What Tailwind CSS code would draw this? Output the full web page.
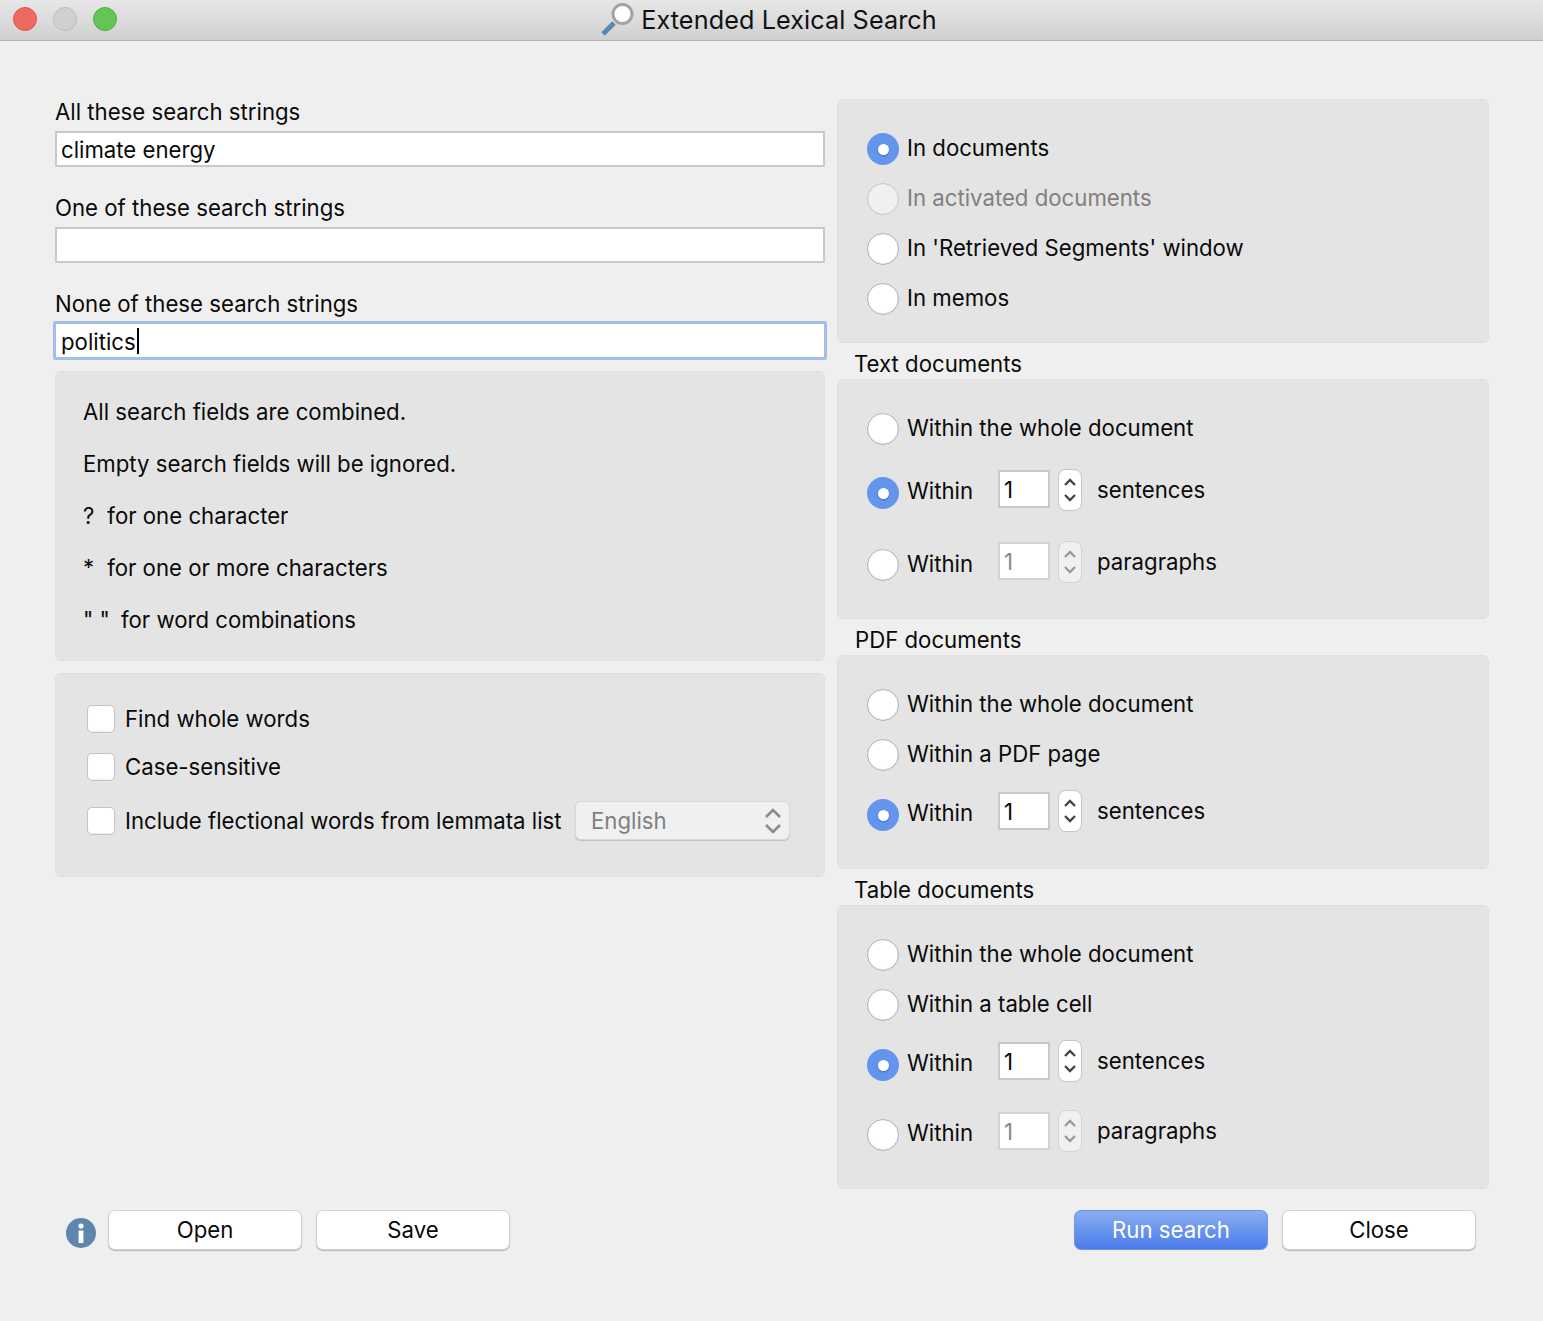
<!DOCTYPE html>
<html lang="en">
<head>
    <meta charset="UTF-8">
    <title>Extended Lexical Search</title>
    <script src="https://cdn.jsdelivr.net/npm/@tailwindcss/browser@4"></script>
</head>
<body class="bg-[#efefef] font-['Inter','Liberation_Sans',sans-serif] text-[22.2px] leading-[28px] text-[#0a0a0a] antialiased">
<div class="w-[1543px] h-[1321px] overflow-hidden flex flex-col">
    <!-- Title bar -->
    <div class="relative h-[41px] shrink-0 bg-gradient-to-b from-[#e8e7e8] to-[#d1d0d1] border-b border-[#b4b4b4] flex items-center justify-center">
        <div class="absolute left-[13px] top-[7px] flex gap-[16px]">
            <div class="w-[24px] h-[24px] rounded-full bg-[#ee6a5f] border border-[#d9574c]"></div>
            <div class="w-[24px] h-[24px] rounded-full bg-[#d0d0d0] border border-[#bcbcbc]"></div>
            <div class="w-[24px] h-[24px] rounded-full bg-[#62c554] border border-[#53ad46]"></div>
        </div>
        <div class="flex items-center gap-[7px] mr-[6px]">
            <svg width="34" height="34" viewBox="0 0 34 34">
                <path d="M3 31 L14 20" stroke="#5c87b0" stroke-width="5" fill="none"/>
                <circle cx="22.5" cy="11" r="9.5" fill="#fff" stroke="#a3a3a3" stroke-width="3"/>
            </svg>
            <span class="text-[25.2px] leading-[30px] tracking-[0.1px] text-[#111]">Extended Lexical Search</span>
        </div>
    </div>

    <div class="flex h-[1168px] shrink-0 pl-[55px] gap-[12px]">
        <!-- Left column -->
        <div class="w-[770px] pt-[58px] flex flex-col">
            <label class="h-[32px] pb-[6px] flex items-center">All these search strings</label>
            <div class="h-[36px] bg-white border-2 border-[#c9c9c9] px-[4px] pt-[2px] flex items-center">climate energy</div>
            <label class="h-[32px] mt-[28px] pb-[6px] flex items-center">One of these search strings</label>
            <div class="h-[36px] bg-white border-2 border-[#c9c9c9]"></div>
            <label class="h-[32px] mt-[26px] pb-[2px] flex items-center">None of these search strings</label>
            <div class="h-[39px] -mx-[2px] bg-white border-[3px] border-[#a3bfe8] rounded-[2px] px-[5px] flex items-center"><span class="pt-[2px]">politics</span><span class="inline-block w-[2px] h-[26px] bg-black ml-[1px]"></span></div>

            <div class="mt-[11px] h-[290px] bg-[#e4e4e4] border border-[#dfdfdf] rounded-[6px] pl-[27px] pt-[26px] flex flex-col gap-[24px]">
                <p>All search fields are combined.</p>
                <p>Empty search fields will be ignored.</p>
                <p class="flex gap-[13px]"><span>?</span><span>for one character</span></p>
                <p class="flex gap-[13px]"><span>*</span><span>for one or more characters</span></p>
                <p class="flex gap-[11px]"><span>" "</span><span>for word combinations</span></p>
            </div>

            <div class="mt-[12px] h-[204px] bg-[#e4e4e4] border border-[#dfdfdf] rounded-[6px] pl-[31px] pt-[31px] flex flex-col">
                <div class="flex items-center gap-[10px] h-[28px]">
                    <div class="w-[28px] h-[28px] bg-white border border-[#c4c4c4] rounded-[5px] shadow-[inset_0_-1px_1px_#eee]"></div>
                    <span>Find whole words</span>
                </div>
                <div class="flex items-center gap-[10px] h-[28px] mt-[20px]">
                    <div class="w-[28px] h-[28px] bg-white border border-[#c4c4c4] rounded-[5px] shadow-[inset_0_-1px_1px_#eee]"></div>
                    <span>Case-sensitive</span>
                </div>
                <div class="flex items-center h-[40px] mt-[20px]">
                    <div class="w-[28px] h-[28px] bg-white border border-[#c4c4c4] rounded-[5px] shadow-[inset_0_-1px_1px_#eee]"></div>
                    <span class="ml-[10px] w-[450px] whitespace-nowrap">Include flectional words from lemmata list</span>
                    <div class="w-[215px] h-[39px] -mt-[1px] bg-[#f0f0f0] rounded-[6px] border border-[#d8d8d8] shadow-[0_1px_1px_#bdbdbd] pl-[15px] pr-[7px] flex items-center justify-between text-[#7f7f7f]">
                        <span>English</span>
                        <svg width="18" height="28" viewBox="0 0 18 28" fill="none" stroke="#8a8a8a" stroke-width="2.6"><path d="M2 10 L9 3 L16 10"/><path d="M2 18 L9 25 L16 18"/></svg>
                    </div>
                </div>
            </div>
        </div>

        <!-- Right column -->
        <div class="w-[652px] pt-[58px] flex flex-col">
            <div class="h-[244px] bg-[#e4e4e4] border border-[#dfdfdf] rounded-[6px] pl-[29px] pt-[33px] flex flex-col gap-[18px]">
                <div class="flex items-center h-[32px] gap-[8px]">
                    <div class="w-[32px] h-[32px] rounded-full bg-[#6495ed] flex items-center justify-center"><div class="w-[11px] h-[11px] rounded-full bg-white shadow-[0_1px_2px_#3f6fc4]"></div></div>
                    <span class="-mt-[3px]">In documents</span>
                </div>
                <div class="flex items-center h-[32px] gap-[8px] text-[#808080]">
                    <div class="w-[32px] h-[32px] rounded-full bg-[#f0f0f0] border border-[#c6c6c6]"></div>
                    <span class="-mt-[3px]">In activated documents</span>
                </div>
                <div class="flex items-center h-[32px] gap-[8px]">
                    <div class="w-[32px] h-[32px] rounded-full bg-white border border-[#b0b0b0] shadow-[inset_0_-1px_1px_#eee]"></div>
                    <span class="-mt-[3px]">In 'Retrieved Segments' window</span>
                </div>
                <div class="flex items-center h-[32px] gap-[8px]">
                    <div class="w-[32px] h-[32px] rounded-full bg-white border border-[#b0b0b0] shadow-[inset_0_-1px_1px_#eee]"></div>
                    <span class="-mt-[3px]">In memos</span>
                </div>
            </div>

            <div class="h-[36px] pl-[17px] pt-[6px] flex items-center">Text documents</div>
            <div class="h-[240px] bg-[#e4e4e4] border border-[#dfdfdf] rounded-[6px] pl-[29px] pt-[33px] flex flex-col">
                <div class="flex items-center h-[32px] gap-[8px]">
                    <div class="w-[32px] h-[32px] rounded-full bg-white border border-[#b0b0b0] shadow-[inset_0_-1px_1px_#eee]"></div>
                    <span class="-mt-[3px]">Within the whole document</span>
                </div>
                <div class="flex h-[42px] mt-[24px]">
                    <div class="w-[32px] h-[32px] mt-[8px] rounded-full bg-[#6495ed] flex items-center justify-center"><div class="w-[11px] h-[11px] rounded-full bg-white shadow-[0_1px_2px_#3f6fc4]"></div></div>
                    <span class="ml-[8px] w-[91px] mt-[8px]">Within</span>
                    <div class="w-[52px] h-[38px] mt-[1px] bg-white border-2 border-[#c9c9c9] pl-[4px] pt-[2px] flex items-center">1</div>
                    <div class="w-[24px] h-[42px] ml-[8px] bg-white border border-[#c6c6c6] rounded-[8px] flex items-center justify-center">
                        <svg width="14" height="28" viewBox="0 0 14 28" fill="none" stroke="#444" stroke-width="2.3"><path d="M2 9 L7 4 L12 9"/><path d="M2 19 L7 24 L12 19"/></svg>
                    </div>
                    <span class="ml-[15px] mt-[7px]">sentences</span>
                </div>
                <div class="flex h-[42px] mt-[30px]">
                    <div class="w-[32px] h-[32px] mt-[8px] rounded-full bg-white border border-[#b0b0b0] shadow-[inset_0_-1px_1px_#eee]"></div>
                    <span class="ml-[8px] w-[91px] mt-[9px]">Within</span>
                    <div class="w-[52px] h-[38px] mt-[1px] bg-white border-2 border-[#d3d3d3] pl-[4px] pt-[2px] flex items-center text-[#888]">1</div>
                    <div class="w-[24px] h-[42px] ml-[8px] bg-[#f0f0f0] border border-[#d3d3d3] rounded-[8px] flex items-center justify-center">
                        <svg width="14" height="28" viewBox="0 0 14 28" fill="none" stroke="#999" stroke-width="2.3"><path d="M2 9 L7 4 L12 9"/><path d="M2 19 L7 24 L12 19"/></svg>
                    </div>
                    <span class="ml-[15px] mt-[7px]">paragraphs</span>
                </div>
            </div>

            <div class="h-[36px] pl-[18px] pt-[6px] flex items-center">PDF documents</div>
            <div class="h-[214px] bg-[#e4e4e4] border border-[#dfdfdf] rounded-[6px] pl-[29px] pt-[33px] flex flex-col">
                <div class="flex items-center h-[32px] gap-[8px]">
                    <div class="w-[32px] h-[32px] rounded-full bg-white border border-[#b0b0b0] shadow-[inset_0_-1px_1px_#eee]"></div>
                    <span class="-mt-[3px]">Within the whole document</span>
                </div>
                <div class="flex items-center h-[32px] gap-[8px] mt-[18px]">
                    <div class="w-[32px] h-[32px] rounded-full bg-white border border-[#b0b0b0] shadow-[inset_0_-1px_1px_#eee]"></div>
                    <span class="-mt-[3px]">Within a PDF page</span>
                </div>
                <div class="flex h-[42px] mt-[18px]">
                    <div class="w-[32px] h-[32px] mt-[10px] rounded-full bg-[#6495ed] flex items-center justify-center"><div class="w-[11px] h-[11px] rounded-full bg-white shadow-[0_1px_2px_#3f6fc4]"></div></div>
                    <span class="ml-[8px] w-[91px] mt-[10px]">Within</span>
                    <div class="w-[52px] h-[38px] mt-[3px] bg-white border-2 border-[#c9c9c9] pl-[4px] pt-[2px] flex items-center">1</div>
                    <div class="w-[24px] h-[42px] ml-[8px] mt-[1px] bg-white border border-[#c6c6c6] rounded-[8px] flex items-center justify-center">
                        <svg width="14" height="28" viewBox="0 0 14 28" fill="none" stroke="#444" stroke-width="2.3"><path d="M2 9 L7 4 L12 9"/><path d="M2 19 L7 24 L12 19"/></svg>
                    </div>
                    <span class="ml-[15px] mt-[8px]">sentences</span>
                </div>
            </div>

            <div class="h-[36px] pl-[17px] pt-[6px] flex items-center">Table documents</div>
            <div class="h-[284px] bg-[#e4e4e4] border border-[#dfdfdf] rounded-[6px] pl-[29px] pt-[33px] flex flex-col">
                <div class="flex items-center h-[32px] gap-[8px]">
                    <div class="w-[32px] h-[32px] rounded-full bg-white border border-[#b0b0b0] shadow-[inset_0_-1px_1px_#eee]"></div>
                    <span class="-mt-[3px]">Within the whole document</span>
                </div>
                <div class="flex items-center h-[32px] gap-[8px] mt-[18px]">
                    <div class="w-[32px] h-[32px] rounded-full bg-white border border-[#b0b0b0] shadow-[inset_0_-1px_1px_#eee]"></div>
                    <span class="-mt-[3px]">Within a table cell</span>
                </div>
                <div class="flex h-[42px] mt-[18px]">
                    <div class="w-[32px] h-[32px] mt-[10px] rounded-full bg-[#6495ed] flex items-center justify-center"><div class="w-[11px] h-[11px] rounded-full bg-white shadow-[0_1px_2px_#3f6fc4]"></div></div>
                    <span class="ml-[8px] w-[91px] mt-[10px]">Within</span>
                    <div class="w-[52px] h-[38px] mt-[3px] bg-white border-2 border-[#c9c9c9] pl-[4px] pt-[2px] flex items-center">1</div>
                    <div class="w-[24px] h-[42px] ml-[8px] mt-[1px] bg-white border border-[#c6c6c6] rounded-[8px] flex items-center justify-center">
                        <svg width="14" height="28" viewBox="0 0 14 28" fill="none" stroke="#444" stroke-width="2.3"><path d="M2 9 L7 4 L12 9"/><path d="M2 19 L7 24 L12 19"/></svg>
                    </div>
                    <span class="ml-[15px] mt-[8px]">sentences</span>
                </div>
                <div class="flex h-[42px] mt-[28px]">
                    <div class="w-[32px] h-[32px] mt-[10px] rounded-full bg-white border border-[#b0b0b0] shadow-[inset_0_-1px_1px_#eee]"></div>
                    <span class="ml-[8px] w-[91px] mt-[10px]">Within</span>
                    <div class="w-[52px] h-[38px] mt-[3px] bg-white border-2 border-[#d3d3d3] pl-[4px] pt-[2px] flex items-center text-[#888]">1</div>
                    <div class="w-[24px] h-[42px] ml-[8px] mt-[1px] bg-[#f0f0f0] border border-[#d3d3d3] rounded-[8px] flex items-center justify-center">
                        <svg width="14" height="28" viewBox="0 0 14 28" fill="none" stroke="#999" stroke-width="2.3"><path d="M2 9 L7 4 L12 9"/><path d="M2 19 L7 24 L12 19"/></svg>
                    </div>
                    <span class="ml-[15px] mt-[8px]">paragraphs</span>
                </div>
            </div>
        </div>
    </div>

    <!-- Footer buttons -->
    <div class="mt-[1px] pl-[66px] flex items-center h-[40px]">
        <svg width="30" height="30" viewBox="0 0 30 30" class="shrink-0 mt-[6px]">
            <circle cx="15" cy="15" r="15" fill="#5f87ae"/>
            <circle cx="15" cy="8" r="2.6" fill="#fff"/>
            <rect x="12.6" y="12.5" width="4.8" height="12.5" fill="#fff"/>
        </svg>
        <button class="ml-[12px] w-[194px] h-[40px] pb-[1px] bg-white rounded-[7px] border border-[#d2d2d2] shadow-[0_1px_1px_#b5b5b5]">Open</button>
        <button class="ml-[14px] w-[194px] h-[40px] pb-[1px] bg-white rounded-[7px] border border-[#d2d2d2] shadow-[0_1px_1px_#b5b5b5]">Save</button>
        <button class="ml-[564px] w-[194px] h-[40px] pb-[1px] rounded-[7px] text-white bg-gradient-to-b from-[#8aaeef] to-[#4a7aec] border border-[#6f94ea]">Run search</button>
        <button class="ml-[14px] w-[194px] h-[40px] pb-[1px] bg-white rounded-[7px] border border-[#d2d2d2] shadow-[0_1px_1px_#b5b5b5]">Close</button>
    </div>
</div>
</body>
</html>
